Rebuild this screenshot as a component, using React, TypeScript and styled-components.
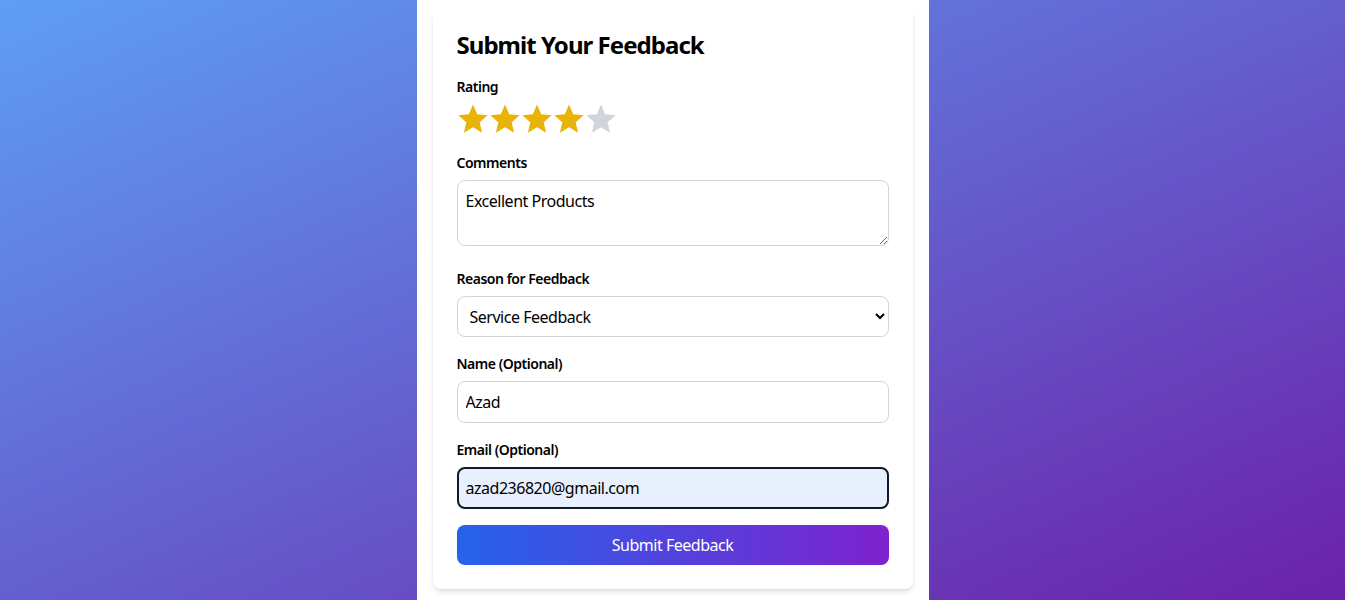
import React, { useState } from "react";
import styled, { createGlobalStyle } from "styled-components";

const GlobalStyle = createGlobalStyle`
  * { box-sizing: border-box; }
  html, body { margin: 0; padding: 0; }
  body {
    font-family: "Noto Sans", "Open Sans", Arial, sans-serif;
    letter-spacing: -0.03em;
    color: #111827;
  }
`;

const Page = styled.div`
  min-height: 100vh;
  display: flex;
  justify-content: center;
  background: linear-gradient(to bottom right, #5e9ef5, #6b21a8);
`;

const Column = styled.div`
  width: 512px;
  min-height: 100vh;
  background: #ffffff;
  padding: 8px 16px 12px;
`;

const Card = styled.form`
  background: #ffffff;
  border-radius: 8px;
  box-shadow: 0 4px 6px -1px rgba(0, 0, 0, 0.1), 0 2px 4px -2px rgba(0, 0, 0, 0.1);
  padding: 21px 24px 24px;
  display: flex;
  flex-direction: column;
  gap: 16px;
`;

const Title = styled.h2`
  margin: 0 0 -1px;
  font-size: 24px;
  line-height: 32px;
  font-weight: 700;
  letter-spacing: -0.04em;
  color: #000;
`;

const Field = styled.div`
  display: flex;
  flex-direction: column;
`;

const Label = styled.label`
  font-size: 14px;
  line-height: 20px;
  font-weight: 600;
  color: #000;
  padding-top: 1px;
  margin-bottom: 7px;
`;

const Stars = styled.div`
  display: flex;
  margin: -1px 0 1px;
`;

const StarButton = styled.button<{ $on: boolean }>`
  border: 0;
  background: none;
  padding: 0;
  width: 32px;
  height: 32px;
  cursor: pointer;
  color: ${(p) => (p.$on ? "#eab308" : "#d1d5db")};
  display: flex;
  align-items: center;
  justify-content: center;
`;

const controlBase = `
  width: 100%;
  font-family: inherit;
  letter-spacing: inherit;
  font-size: 16px;
  line-height: 24px;
  color: #000;
  border: 1px solid #d1d5db;
  border-radius: 8px;
  background: #fff;
  padding: 8px;
  outline: none;
`;

const TextArea = styled.textarea`
  ${controlBase}
  height: 66px;
  resize: vertical;
  display: block;
  margin-bottom: 6px;
`;

const Select = styled.select`
  ${controlBase}
  height: 41px;
  padding: 8px 8px;
`;

const Input = styled.input<{ $focused?: boolean }>`
  ${controlBase}
  height: 42px;
  ${(p) =>
    p.$focused
      ? `border: 2px solid #111827; background: #e8f0fe; padding: 7px;`
      : ""}
`;

const SubmitButton = styled.button`
  height: 40px;
  border: 0;
  border-radius: 8px;
  background: linear-gradient(to right, #2563eb, #7e22ce);
  color: #fff;
  font-family: inherit;
  letter-spacing: inherit;
  font-size: 16px;
  cursor: pointer;
`;

const Star = () => (
  <svg width="32" height="32" viewBox="0 0 24 24" fill="currentColor">
    <polygon points="12,1.2 15.1,8.5 23,9.2 17,14.4 18.8,22.3 12,18.2 5.2,22.3 7,14.4 1,9.2 8.9,8.5" />
  </svg>
);

export default function App() {
  const [rating, setRating] = useState(4);
  const [comments, setComments] = useState("Excellent Products");
  const [reason, setReason] = useState("Service Feedback");
  const [name, setName] = useState("Azad");
  const [email, setEmail] = useState("azad236820@gmail.com");

  return (
    <>
      <GlobalStyle />
      <Page>
        <Column>
          <Card onSubmit={(e) => e.preventDefault()}>
            <Title>Submit Your Feedback</Title>
            <Field>
              <Label>Rating</Label>
              <Stars>
                {[1, 2, 3, 4, 5].map((n) => (
                  <StarButton type="button" key={n} $on={n <= rating} onClick={() => setRating(n)}>
                    <Star />
                  </StarButton>
                ))}
              </Stars>
            </Field>
            <Field>
              <Label>Comments</Label>
              <TextArea value={comments} onChange={(e) => setComments(e.target.value)} />
            </Field>
            <Field>
              <Label>Reason for Feedback</Label>
              <Select value={reason} onChange={(e) => setReason(e.target.value)}>
                <option>Product Feedback</option>
                <option>Service Feedback</option>
                <option>Other</option>
              </Select>
            </Field>
            <Field>
              <Label>Name (Optional)</Label>
              <Input value={name} onChange={(e) => setName(e.target.value)} />
            </Field>
            <Field>
              <Label>Email (Optional)</Label>
              <Input $focused value={email} onChange={(e) => setEmail(e.target.value)} />
            </Field>
            <SubmitButton type="submit">Submit Feedback</SubmitButton>
          </Card>
        </Column>
      </Page>
    </>
  );
}
